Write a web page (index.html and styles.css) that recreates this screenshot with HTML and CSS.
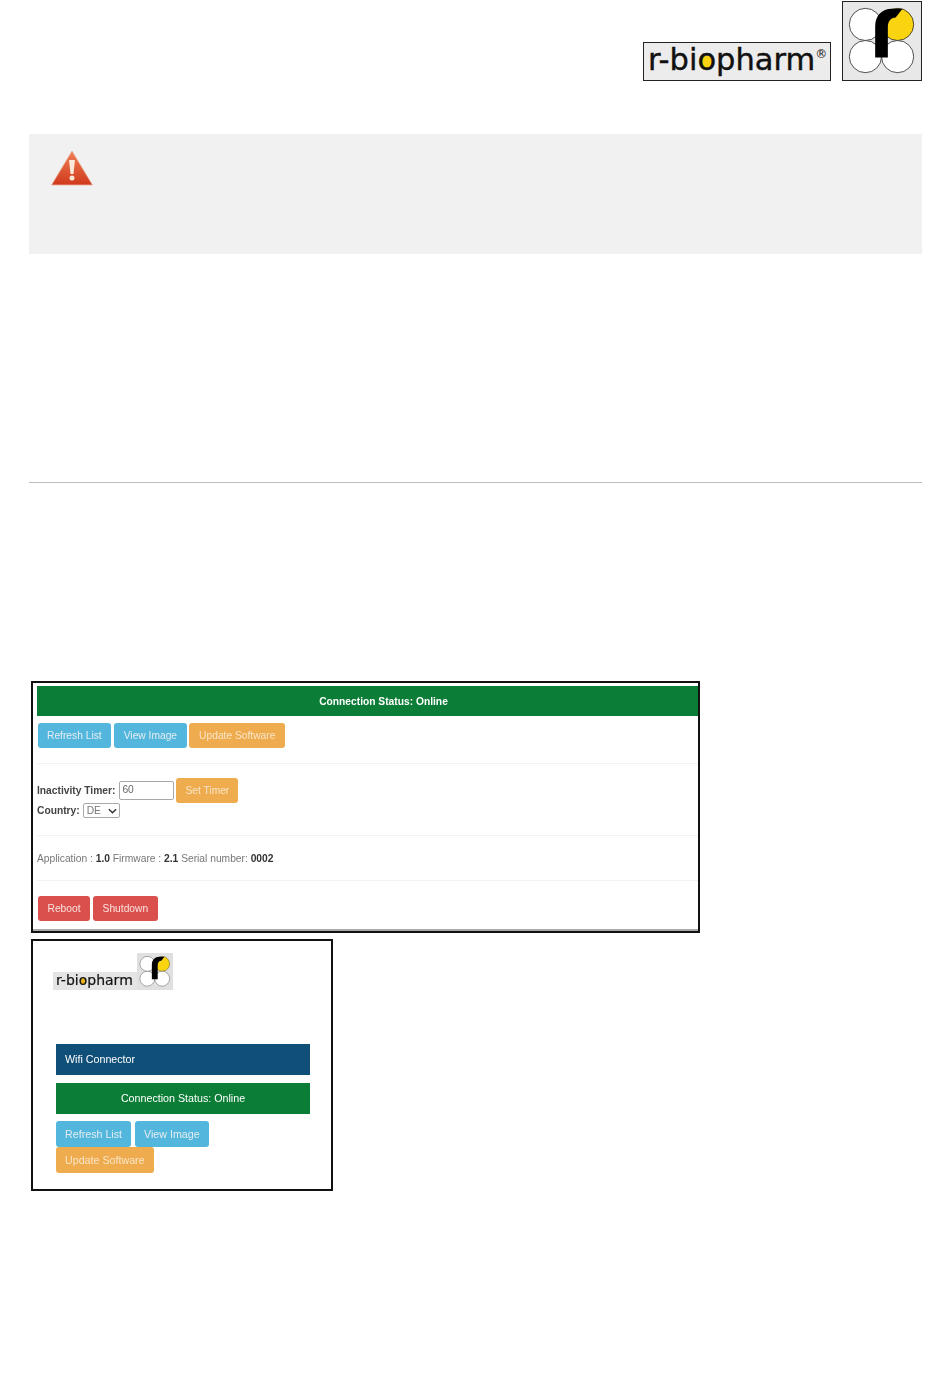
FILE: index.html
```html
<!DOCTYPE html>
<html lang="en">
<head>
    <meta charset="UTF-8">
    <title>Wifi Connector</title>
    <link rel="stylesheet" href="styles.css">
</head>
<body>
    <svg class="defs" width="0" height="0">
        <symbol id="mark" viewBox="0 0 80 80">
            <circle cx="23" cy="23" r="16.5" fill="#fff" stroke="#222" stroke-width=".8"/>
            <circle cx="56" cy="23" r="16.5" fill="#fad410" stroke="#222" stroke-width=".8"/>
            <circle cx="23" cy="56" r="16.5" fill="#fff" stroke="#222" stroke-width=".8"/>
            <circle cx="56" cy="56" r="16.5" fill="#fff" stroke="#222" stroke-width=".8"/>
            <path d="M33 57V25C33 14 40 7 50 7H61L54 16C49 16 46 20 46 26V57Z" fill="#000"/>
        </symbol>
    </svg>

    <div class="header">
        <div class="wordmark">r-bi<span class="yellowO">o</span>pharm<sup>®</sup></div>
        <svg class="mark" viewBox="0 0 80 80"><use href="#mark"/></svg>
    </div>

    <div class="warning">
        <svg class="warnIcon" viewBox="0 0 42 36">
            <defs>
                <linearGradient id="warnFill" x1="0" y1="0" x2="0" y2="1">
                    <stop offset="0" stop-color="#ef7f55"/>
                    <stop offset="1" stop-color="#d0391c"/>
                </linearGradient>
            </defs>
            <path d="M21 1L41.500 35H.5Z" fill="url(#warnFill)" stroke="#e9b3a0" stroke-width=".8"/>
            <path d="M18 10H24L22.500 24H19.500Z" fill="#fbe6da"/>
            <circle cx="21" cy="28" r="2.500" fill="#fbe6da"/>
        </svg>
    </div>

    <div class="divider"></div>

    <div class="shot shotWide">
        <div class="bar green">Connection Status: Online</div>
        <div class="row rowButtons">
            <span class="btn blue">Refresh List</span>
            <span class="btn blue">View Image</span>
            <span class="btn orange">Update Software</span>
        </div>
        <div class="row rowForm">
            <div class="line">
                <b class="label">Inactivity Timer:</b>
                <span class="input">60</span>
                <span class="btn orange">Set Timer</span>
            </div>
            <div class="line">
                <b class="label">Country:</b>
                <span class="select">DE
                    <svg viewBox="0 0 10 6" width="9" height="6"><path d="M1 1L5 5L9 1" fill="none" stroke="#333" stroke-width="1.600"/></svg>
                </span>
            </div>
        </div>
        <div class="row rowInfo">
            Application : <b>1.0</b> Firmware : <b>2.1</b> Serial number: <b>0002</b>
        </div>
        <div class="row rowPower">
            <span class="btn red">Reboot</span>
            <span class="btn red">Shutdown</span>
        </div>
    </div>

    <div class="shot shotNarrow">
        <div class="miniLogo">
            <div class="wordmark mini">r-bi<span class="yellowO">o</span>pharm</div>
            <svg class="miniMark" viewBox="0 0 80 80"><use href="#mark"/></svg>
        </div>
        <div class="bar navy">Wifi Connector</div>
        <div class="bar green">Connection Status: Online</div>
        <div class="miniButtons">
            <span class="btn blue">Refresh List</span>
            <span class="btn blue">View Image</span>
            <span class="btn orange">Update Software</span>
        </div>
    </div>
</body>
</html>
```

FILE: styles.css
```css
body {
    margin: 0;
    height: 1383px;
    padding: 1px 28px 0 29px;
    box-sizing: border-box;
    background: #fff;
    font-family: "Liberation Sans", Arial, sans-serif;
    overflow: hidden;
}
.defs {
    display: none;
}

.header {
    display: flex;
    justify-content: flex-end;
    align-items: flex-end;
    gap: 11px;
    height: 80px;
}
.wordmark {
    width: 188px;
    height: 39px;
    box-sizing: border-box;
    border: 1px solid #222;
    background: #ececec;
    font-family: "DejaVu Sans", sans-serif;
    font-size: 30.500px;
    line-height: 34px;
    color: #111;
    -webkit-text-stroke: .4px #111;
    padding-left: 4px;
    white-space: nowrap;
}
.wordmark sup {
    font-size: 12px;
    line-height: 0;
    vertical-align: 12px;
    -webkit-text-stroke: 0;
}
.yellowO {
    background: radial-gradient(circle at 50% 20px, #fad410 0, #fad410 6px, transparent 6.500px);
}
.mark {
    width: 80px;
    height: 80px;
    box-sizing: border-box;
    border: 1px solid #222;
    background: #e8e8e8;
}

.warning {
    margin-top: 53px;
    height: 120px;
    background: #f1f1f1;
    padding: 16px 0 0 22px;
    box-sizing: border-box;
}
.warnIcon {
    display: block;
    width: 42px;
    height: 36px;
}

.divider {
    margin-top: 228px;
    height: 1px;
    background: #bdbdbd;
}

.shot {
    box-sizing: border-box;
    border: 2px solid #111;
    margin-left: 2px;
    font-size: 10.250px;
    color: #333;
}
.shot > * {
    filter: blur(.4px);
}
.shotWide {
    margin-top: 198px;
    width: 669px;
    height: 252px;
    padding: 3px 0 0 4px;
    box-shadow: inset 0 -2px 0 #aaa;
}
.shotNarrow {
    margin-top: 6px;
    width: 302px;
    height: 252px;
    padding: 12px 21px 0 23px;
    font-size: 10.700px;
}

.bar {
    height: 31px;
    line-height: 31px;
    color: #fff;
    padding: 0 9px;
}
.green {
    background: #0b7d36;
}
.navy {
    background: #104f78;
    margin-bottom: 8px;
}
.shotWide .green {
    height: 30px;
    line-height: 32px;
    padding: 0 0 0 32px;
    text-align: center;
    font-weight: bold;
}
.shotNarrow .green {
    text-align: center;
}

.btn {
    display: inline-block;
    height: 25px;
    line-height: 25px;
    padding: 0 9px;
    border-radius: 3px;
    box-sizing: border-box;
    white-space: nowrap;
    color: #e4eef2;
}
.blue {
    background: #53b6dc;
}
.orange {
    background: #efac4f;
    color: #f8e4c6;
}
.red {
    background: #d9504c;
    color: #fbe3e2;
}

.row {
    border-bottom: 1px solid #f2f2f2;
    box-sizing: border-box;
}
.rowButtons {
    height: 48px;
    padding: 7px 0 0 1px;
    display: flex;
    gap: 3px;
}
.rowButtons .btn + .btn {
    padding: 0 10px;
}
.rowButtons .orange {
    margin-left: -1px;
}
.rowForm {
    height: 72px;
    padding-top: 14px;
}
.line {
    display: flex;
    align-items: center;
    gap: 3px;
}
.label {
    color: #444;
}
.input {
    width: 55px;
    height: 19px;
    line-height: 16px;
    box-sizing: border-box;
    border: 1.500px solid #a8a8a8;
    border-radius: 2px;
    margin: 0 -1px 0 1px;
    padding-left: 2px;
    color: #666;
}
.select {
    width: 37px;
    height: 15px;
    line-height: 13px;
    box-sizing: border-box;
    border: 1px solid #aaa;
    border-radius: 2px;
    padding: 0 2px 0 3px;
    color: #777;
    display: flex;
    align-items: center;
    justify-content: space-between;
}
.rowInfo {
    height: 45px;
    line-height: 45px;
    color: #777;
}
.rowInfo b {
    color: #333;
}
.rowPower {
    border-bottom: 0;
    padding: 15px 0 0 1px;
    display: flex;
    gap: 3px;
}
.rowPower .btn {
    padding: 0 9.500px;
}

.miniLogo {
    display: flex;
    align-items: flex-end;
    margin-left: -3px;
    margin-bottom: 54px;
    height: 37px;
}
.mini {
    width: 84px;
    height: 18px;
    border: 0;
    background: #e4e4e4;
    font-size: 14px;
    line-height: 17px;
    -webkit-text-stroke: .2px #111;
    padding-left: 3px;
}
.mini .yellowO {
    background: radial-gradient(circle at 50% 9.200px, #e8b520 0, #e8b520 3px, transparent 3.500px);
}
.miniMark {
    width: 36px;
    height: 37px;
    background: #e0e0e0;
}
.miniButtons {
    margin-top: 7px;
    display: flex;
    flex-wrap: wrap;
    column-gap: 4px;
    width: 170px;
}
.miniButtons .btn {
    height: 26px;
    line-height: 26px;
}
```
